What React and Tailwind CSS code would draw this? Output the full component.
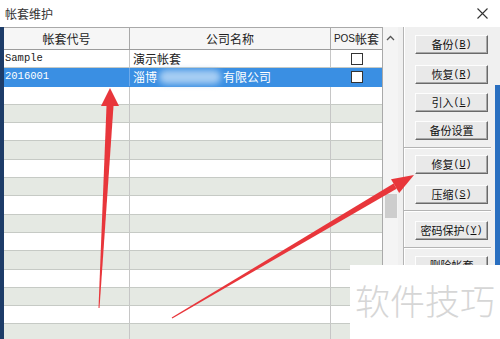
import React from "react";

const rows = [
  { code: "Sample", name: "演示帐套", check: true },
  { code: "2016001", name: "淄博", blur: true, check: true, selected: true },
  ...Array.from({ length: 14 }, () => ({})),
];

function Btn({ label, hot, mt }) {
  return (
    <div
      className={`${mt} ml-[11px] flex h-[19px] w-[73px] items-center justify-center border border-t-[#fdfdfd] border-l-[#fdfdfd] border-b-[#6a6a6a] border-r-[#6a6a6a] bg-[#e9e9e9] text-[11px] leading-none text-[#111] shadow-[inset_-1px_-1px_0_#a8a8a8]`}
    >
      <span>{label}</span>
      {hot && (
        <span className="font-['Liberation_Mono',monospace] text-[10px]">
          (<span className="underline">{hot}</span>)
        </span>
      )}
    </div>
  );
}

function Sep({ mt }) {
  return <div className={`${mt} h-[2px] w-full border-t border-[#b4b4b4] border-b border-b-white`} />;
}

export default function App() {
  return (
    <div className="relative h-[339px] w-[500px] overflow-hidden bg-white font-['Noto_Sans_CJK_SC',sans-serif] text-[#222]">
      {/* Title bar */}
      <div className="flex h-[27px] items-center justify-between pl-[5px] pr-[12px]">
        <span className="text-[12px] text-[#333]">帐套维护</span>
        <svg width="11" height="11" viewBox="0 0 11 11" className="mb-[1px]">
          <path d="M0.5 0.5 L10.5 10.5 M10.5 0.5 L0.5 10.5" stroke="#333" strokeWidth="1.1" />
        </svg>
      </div>

      <div className="flex h-[312px]">
        {/* left edge */}
        <div className="w-[4px] bg-[#1d3c68]" />

        {/* Grid */}
        <div className="w-[379px] border-t border-r border-[#a9a9a9]">
          <div className="flex h-[22px] border-b border-[#9c9c9c] bg-[#f6f6f6] text-[12px] leading-none">
            <div className="flex w-[126px] items-center justify-center border-r border-[#a8a8a8]">帐套代号</div>
            <div className="flex w-[201px] items-center justify-center border-r border-[#a8a8a8]">公司名称</div>
            <div className="flex flex-1 items-center justify-center">
              <span className="font-['Liberation_Sans',sans-serif] text-[10px]">POS</span>帐套
            </div>
          </div>
          {rows.map((r, i) => (
            <div
              key={i}
              className={`flex h-[18.3px] border-b ${
                r.selected
                  ? "border-[#3a8fe3] bg-[#3a8fe3] text-white"
                  : i % 2 === 0
                  ? "border-[#c6cac5] bg-white"
                  : "border-[#c6cac5] bg-[#e5e9e3]"
              }`}
            >
              <div
                className={`flex w-[126px] items-center border-r pl-[1px] font-['Liberation_Mono',monospace] text-[10.5px] ${
                  r.selected ? "border-[#6eaaea]" : "border-[#c6c6c6]"
                }`}
              >
                {r.code}
              </div>
              <div
                className={`flex w-[201px] items-center border-r pl-[3px] text-[12px] ${
                  r.selected ? "border-[#3a8fe3]" : "border-[#c6c6c6]"
                }`}
              >
                {r.name}
                {r.blur && (
                  <>
                    <span className="mx-[2px] inline-block h-[14px] w-[62px] rounded-full bg-[#a6cdf3] blur-[3px]" />
                    <span>有限公司</span>
                  </>
                )}
              </div>
              <div className="flex flex-1 items-center justify-center">
                {r.check && <div className="h-[12px] w-[12px] border border-[#333] bg-white" />}
              </div>
            </div>
          ))}
        </div>

        {/* Scrollbar */}
        <div className="flex w-[15px] flex-col items-center bg-[#f4f4f4]">
          <svg width="9" height="6" viewBox="0 0 9 6" className="mt-[8px]">
            <path d="M1 5 L4.5 1.5 L8 5" stroke="#555" strokeWidth="1.3" fill="none" />
          </svg>
          <div className="mt-[153px] h-[24px] w-[12px] bg-[#cdcdcd]" />
        </div>

        {/* Button panel */}
        <div className="flex w-[97px] bg-[#f0f0f0] pl-[5px]">
          <div className="flex w-[88px] flex-col border-l border-[#b4b4b4] shadow-[inset_1px_0_0_#fff]">
            <Btn label="备份" hot="B" mt="mt-[8px]" />
            <Btn label="恢复" hot="R" mt="mt-[11px]" />
            <Btn label="引入" hot="L" mt="mt-[9px]" />
            <Btn label="备份设置" mt="mt-[9px]" />
            <Sep mt="mt-[7px]" />
            <Btn label="修复" hot="U" mt="mt-[6px]" />
            <Btn label="压缩" hot="S" mt="mt-[11px]" />
            <Sep mt="mt-[6px]" />
            <Btn label="密码保护" hot="Y" mt="mt-[9px]" />
            <Sep mt="mt-[7px]" />
            <Btn label="删除帐套" mt="mt-[7px]" />
          </div>
        </div>

        {/* right edge */}
        <div className="flex w-[5px] flex-col">
          <div className="h-[58px] bg-[#f0f0f0]" />
          <div className="flex-1 bg-[#2a6fc0]" />
        </div>
      </div>

      {/* Red annotation arrows */}
      <svg className="pointer-events-none absolute left-0 top-0" width="500" height="339" viewBox="0 0 500 339">
        <polygon points="98.5,308 99.5,308 113.5,106 106.5,106" fill="#e8363b" />
        <polygon points="110,88 101,106 119,106" fill="#e8363b" />
        <polygon points="171.7,317.6 172.3,318.4 396.6,188.8 393.6,183.6" fill="#e8363b" />
        <polygon points="414,175 399.2,193.1 391,179.3" fill="#e8363b" />
      </svg>

      {/* Watermark */}
      <div className="absolute left-[350px] top-[265px] h-[74px] w-[150px] bg-white pl-[5px] pt-[17px]">
        <span className="text-[35px] font-light leading-none text-[#d6d6d6]">软件技巧</span>
      </div>
    </div>
  );
}
